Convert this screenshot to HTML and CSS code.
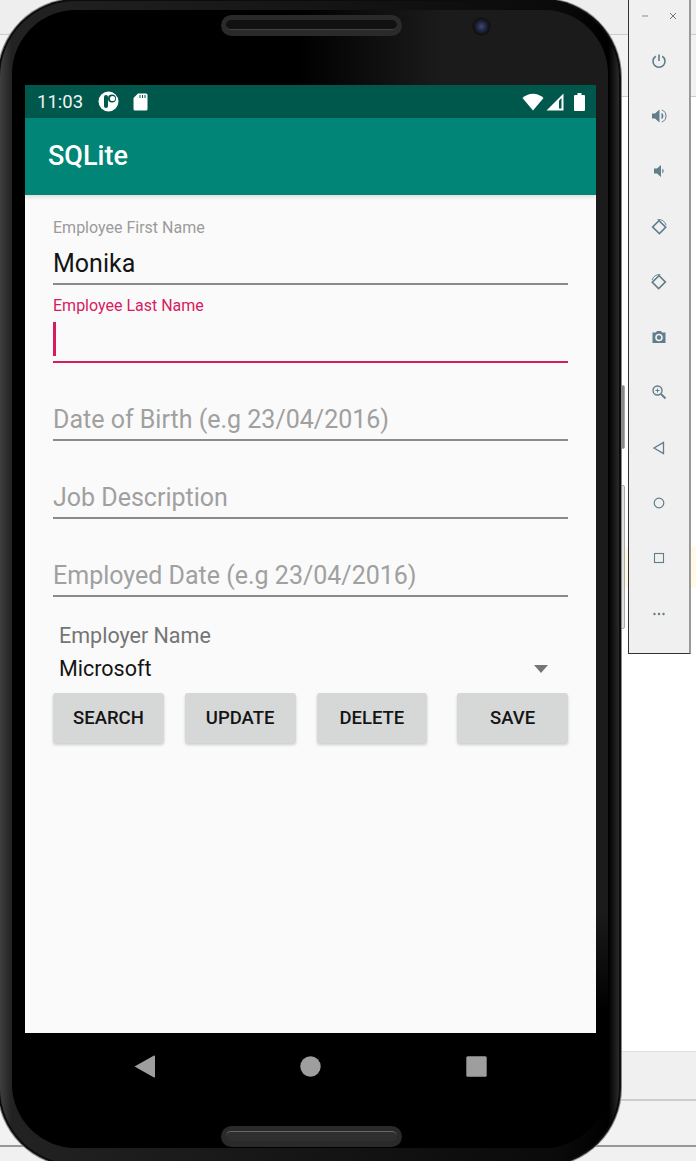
FILE: index.html
```html
<!DOCTYPE html>
<html lang="en">
<head>
  <meta charset="UTF-8">
  <title>SQLite</title>
  <link rel="stylesheet" href="styles.css">
</head>
<body>
  <div class="backdrop">
    <div class="band band-top"></div>
    <div class="band band-second"></div>
    <div class="band band-white"></div>
    <div class="band band-low"></div>
    <div class="band band-lower"></div>
    <div class="band band-last"></div>
  </div>
  <div class="tint"></div>

  <div class="side-key side-key-a"></div>
  <div class="side-key side-key-b"></div>

  <div class="phone">
    <div class="bezel">
      <div class="speaker speaker-top"><span></span></div>
      <div class="camera"></div>

      <div class="screen">
        <div class="status-bar">
          <span class="clock">11:03</span>
          <svg class="st-disc" width="21" height="21" viewBox="0 0 21 21">
            <circle cx="10.5" cy="10.5" r="10" fill="#fff"/>
            <rect x="6" y="4" width="4" height="13" rx="2" fill="#00574b"/>
            <circle cx="14" cy="7.5" r="4" fill="#00574b"/>
            <circle cx="14.5" cy="7.5" r="2.6" fill="#fff"/>
          </svg>
          <svg class="st-sd" width="15" height="18" viewBox="0 0 15 18">
            <path d="M5 0.5h8a1.5 1.5 0 0 1 1.5 1.5v14a1.5 1.5 0 0 1-1.5 1.5H2A1.5 1.5 0 0 1 .5 16V5z" fill="#fff"/>
            <path d="M6.5 2h1v3h-1zM9 2h1v3H9zM11.5 2h1v3h-1z" fill="#00574b"/>
          </svg>
          <span class="st-space"></span>
          <svg width="22" height="18" viewBox="0 0 22 18">
            <path d="M11 17.5L.5 5C3.2 2.4 6.8 .8 11 .8S18.8 2.4 21.5 5z" fill="#fff"/>
          </svg>
          <svg class="st-signal" width="18" height="18" viewBox="0 0 18 18">
            <path d="M17.5 .5V17.5H.5z" fill="#fff"/>
            <path d="M11.5 8H15.5V15.5H11.5z" fill="#00574b" opacity="0"/>
            <path d="M13 7.5L13 15.5H15.5V5z" fill="#00574b"/>
          </svg>
          <svg class="st-battery" width="11" height="18" viewBox="0 0 11 18">
            <path d="M3.5 0h4v2H10a1 1 0 0 1 1 1v14a1 1 0 0 1-1 1H1a1 1 0 0 1-1-1V3a1 1 0 0 1 1-1h2.5z" fill="#fff"/>
          </svg>
        </div>
        <div class="app-bar">SQLite</div>

        <div class="content">
          <div class="field">
            <div class="float-label">Employee First Name</div>
            <div class="value">Monika</div>
          </div>
          <div class="field field-focus">
            <div class="float-label">Employee Last Name</div>
            <div class="value"><span class="caret"></span></div>
          </div>
          <div class="field">
            <div class="value hint">Date of Birth (e.g 23/04/2016)</div>
          </div>
          <div class="field">
            <div class="value hint">Job Description</div>
          </div>
          <div class="field">
            <div class="value hint">Employed Date (e.g 23/04/2016)</div>
          </div>

          <div class="spinner">
            <div class="spinner-label">Employer Name</div>
            <div class="spinner-row">
              <span>Microsoft</span>
              <span class="spinner-arrow"></span>
            </div>
          </div>

          <div class="buttons">
            <button class="btn">SEARCH</button>
            <button class="btn">UPDATE</button>
            <button class="btn">DELETE</button>
            <button class="btn btn-save">SAVE</button>
          </div>
        </div>
      </div>

      <div class="nav-bar">
        <svg width="21" height="23" viewBox="0 0 21 23"><path d="M20 .5a.8.8 0 0 1 1 .8v20.4a.8.8 0 0 1-1 .8L.5 11.5z" fill="#9e9e9e"/></svg>
        <svg width="21" height="21" viewBox="0 0 21 21"><circle cx="10.5" cy="10.5" r="10.2" fill="#9e9e9e"/></svg>
        <svg width="21" height="21" viewBox="0 0 21 21"><rect x=".3" y=".3" width="20.4" height="20.4" rx="1.5" fill="#9e9e9e"/></svg>
      </div>

      <div class="speaker speaker-bottom"><span></span></div>
    </div>
  </div>

  <div class="toolbar">
    <div class="win-controls">
      <svg width="8" height="8" viewBox="0 0 8 8"><path d="M1 4h6" stroke="#7d8f99" stroke-width="1"/></svg>
      <svg width="8" height="8" viewBox="0 0 8 8"><path d="M1 1l6 6M7 1l-6 6" stroke="#607d8b" stroke-width="1"/></svg>
    </div>
    <div class="tool">
      <svg width="16" height="16" viewBox="0 0 16 16"><path d="M8 1.5v6.5" stroke="#607d8b" stroke-width="1.6" fill="none"/><path d="M4.8 3.2a6 6 0 1 0 6.4 0" stroke="#607d8b" stroke-width="1.6" fill="none"/></svg>
    </div>
    <div class="tool">
      <svg width="16" height="16" viewBox="0 0 16 16"><path d="M1 5.5h3L8.5 1.5v13L4 10.5H1z" fill="#607d8b"/><path d="M10.5 4.8a3.6 3.6 0 0 1 0 6.4z" fill="#607d8b"/><path d="M10.8 2a6.4 6.4 0 0 1 0 12" stroke="#607d8b" fill="none"/></svg>
    </div>
    <div class="tool">
      <svg width="16" height="16" viewBox="0 0 16 16"><path d="M3 5.5h3L10 2v12L6 10.5H3z" fill="#607d8b"/><path d="M11.3 5.5a3 3 0 0 1 0 5z" fill="#607d8b"/></svg>
    </div>
    <div class="tool">
      <svg width="16" height="16" viewBox="0 0 16 16"><rect x="3.5" y="3.5" width="9" height="9.5" transform="rotate(-45 8 8)" fill="none" stroke="#607d8b" stroke-width="1.6"/><path d="M6.5 .6a7.5 7.5 0 0 1 8.6 5.6" fill="none" stroke="#607d8b" stroke-width=".9"/></svg>
    </div>
    <div class="tool">
      <svg width="16" height="16" viewBox="0 0 16 16"><rect x="3.5" y="3.5" width="9" height="9.5" transform="rotate(45 8 8)" fill="none" stroke="#607d8b" stroke-width="1.6"/><path d="M1 6.200a7.500 7.500 0 0 1 8.400-5.600" fill="none" stroke="#607d8b" stroke-width=".9"/></svg>
    </div>
    <div class="tool">
      <svg width="16" height="16" viewBox="0 0 16 16"><path d="M1.500 3.500h3.500l1-1.500h4l1 1.500h3.500v10.500h-13z" fill="#607d8b"/><circle cx="8" cy="8.500" r="3" fill="none" stroke="#f0f0f0" stroke-width="1.600"/></svg>
    </div>
    <div class="tool">
      <svg width="16" height="16" viewBox="0 0 16 16"><circle cx="6.500" cy="6.500" r="4.500" fill="none" stroke="#607d8b" stroke-width="1.400"/><path d="M10 10l4.500 4.500" stroke="#607d8b" stroke-width="1.800"/><path d="M4.500 6.500h4M6.500 4.500v4" stroke="#607d8b"/></svg>
    </div>
    <div class="tool">
      <svg width="16" height="16" viewBox="0 0 16 16"><path d="M12.500 2.500v11L3 8z" fill="none" stroke="#607d8b" stroke-width="1.300"/></svg>
    </div>
    <div class="tool">
      <svg width="16" height="16" viewBox="0 0 16 16"><circle cx="8" cy="8" r="4.800" fill="none" stroke="#607d8b" stroke-width="1.200"/></svg>
    </div>
    <div class="tool">
      <svg width="16" height="16" viewBox="0 0 16 16"><rect x="3.500" y="3.500" width="9" height="9" fill="none" stroke="#607d8b" stroke-width="1.100"/></svg>
    </div>
    <div class="tool">
      <svg width="16" height="16" viewBox="0 0 16 16"><circle cx="3.500" cy="8" r="1.200" fill="#607d8b"/><circle cx="8" cy="8" r="1.200" fill="#607d8b"/><circle cx="12.500" cy="8" r="1.200" fill="#607d8b"/></svg>
    </div>
  </div>
</body>
</html>
```

FILE: styles.css
```css
* {
  box-sizing: border-box;
}

html, body {
  margin: 0;
  height: 100%;
}

body {
  position: relative;
  width: 696px;
  height: 1161px;
  overflow: hidden;
  background-color: #fff;
  font-family: Roboto, sans-serif;
}

/* emulator host window behind the phone */
.backdrop {
  position: absolute;
  inset: 0;
  display: flex;
  flex-direction: column;
}

.band-top {
  height: 35px;
  background-color: #eee;
  border-bottom: 1px solid #ccc;
}

.band-second {
  height: 62px;
  background-color: #f2f2f2;
  border-bottom: 1px solid #ccc;
}

.band-white {
  height: 955px;
  background-color: #fff;
  border-bottom: 1px solid #ddd;
}

.band-low {
  height: 49px;
  background-color: #f0f0f0;
  border-bottom: 2px solid #ccc;
}

.band-lower {
  height: 46px;
  background-color: #f2f2f2;
  border-bottom: 2px solid #999;
}

.band-last {
  flex: 1;
  background-color: #f0f0f0;
}

.tint {
  position: absolute;
  left: 622px;
  top: 547px;
  width: 74px;
  height: 41px;
  background-color: #fff9e6;
}

.side-key {
  position: absolute;
  left: 619px;
  width: 6px;
  border: 1px solid #aaa;
  border-radius: 2px;
  background-color: #ddd;
}

.side-key-a {
  top: 385px;
  height: 64px;
  background-color: #888;
}

.side-key-b {
  top: 485px;
  height: 144px;
}

.phone {
  position: absolute;
  left: -2px;
  top: -1px;
  width: 623px;
  height: 1167px;
  padding: 11px 13px 18px 14px;
  border-radius: 78px;
  background-color: #333;
  background-image: linear-gradient(90deg, #444 0, #222 2.2%, #0a0a0a 90%, #000 98%, #333 100%);
  box-shadow: 0 0 0 1px #8a8a8a, inset 0 0 0 2px #0c0c0c;
}

.bezel {
  position: relative;
  height: 100%;
  padding: 75px 0 0 13px;
  border-radius: 64px;
  background-image:
    linear-gradient(180deg, transparent 900px, #000 1000px),
    linear-gradient(90deg, #000 48%, #1b1b1b 72%);
}

.speaker {
  position: absolute;
  left: 209px;
  width: 181px;
  height: 21px;
  padding: 5px 5px;
  border-radius: 11px;
  background-color: #2a2a2a;
}

.speaker span {
  display: block;
  height: 10px;
  border-radius: 5px;
  background-color: #111;
  border-bottom: 1px solid #444;
}

.speaker-top {
  top: 5px;
}

.speaker-bottom {
  bottom: 1px;
}

.speaker-bottom span {
  background-color: #2e2e2e;
  border-bottom: 0;
  border-top: 1px solid #666;
}

.camera {
  position: absolute;
  left: 460px;
  top: 7px;
  width: 19px;
  height: 19px;
  border-radius: 50%;
  background: radial-gradient(circle at 50% 50%, #3e4870 0, #1f2440 35%, #111 60%, #222 100%);
}

.screen {
  width: 571px;
  height: 948px;
  display: flex;
  flex-direction: column;
  background-color: #fafafa;
}

.status-bar {
  height: 33px;
  display: flex;
  align-items: center;
  padding: 0 11px 0 12px;
  background-color: #00574b;
  color: #fff;
}

.clock {
  font-size: 18.500px;
  margin-right: 15px;
  color: #eef5f4;
}

.st-sd {
  margin-left: 14px;
}

.st-space {
  flex: 1;
}

.st-signal {
  margin-left: 2px;
}

.st-battery {
  margin-left: 10px;
}

.app-bar {
  height: 77px;
  display: flex;
  align-items: center;
  padding-left: 23px;
  padding-bottom: 1px;
  background-color: #008577;
  color: #fff;
  font-size: 27px;
  font-weight: 500;
  box-shadow: 0 2px 4px rgba(0, 0, 0, 0.12);
  position: relative;
}

.content {
  flex: 1;
  padding: 12px 28px 0;
}

.field {
  height: 78px;
  display: flex;
  flex-direction: column;
  justify-content: flex-end;
  border-bottom: 2px solid #8a8a8a;
  padding-bottom: 3px;
}

.float-label {
  font-size: 16px;
  line-height: 20px;
  margin-bottom: 10px;
  color: #9b9b9b;
}

.value {
  height: 32px;
  font-size: 25px;
  line-height: 32px;
  color: #141414;
}

.hint {
  color: #a0a0a0;
}

.field-focus {
  border-bottom-color: #d81b60;
}

.field-focus .float-label {
  color: #d81b60;
  margin-bottom: 6px;
}

.field-focus .value {
  height: 36px;
}

.caret {
  display: block;
  width: 3px;
  height: 34px;
  background-color: #d81b60;
}

.spinner {
  padding: 26px 6px 0;
}

.spinner-label {
  font-size: 21.500px;
  line-height: 26px;
  color: #757575;
}

.spinner-row {
  display: flex;
  justify-content: space-between;
  align-items: center;
  margin-top: 5px;
  padding-right: 14px;
  font-size: 21.500px;
  line-height: 30px;
  color: #141414;
}

.spinner-arrow {
  width: 0;
  height: 0;
  border-left: 7px solid transparent;
  border-right: 7px solid transparent;
  border-top: 8px solid #757575;
}

.buttons {
  display: flex;
  gap: 21px;
  margin-top: 9px;
}

.btn {
  width: 111px;
  height: 50px;
  padding: 0;
  border: 0;
  border-radius: 3px;
  background-color: #d6d7d7;
  box-shadow: 0 2px 3px rgba(0, 0, 0, 0.18);
  color: #141414;
  font-family: Roboto, sans-serif;
  font-size: 18.500px;
  font-weight: 500;
}

.btn-save {
  margin-left: 9px;
}

.nav-bar {
  width: 571px;
  height: 67px;
  display: flex;
  justify-content: center;
  align-items: center;
  gap: 145px;
  background-color: #000;
}

/* emulator side toolbar */
.toolbar {
  position: absolute;
  left: 628px;
  top: 0;
  width: 63px;
  height: 654px;
  padding-top: 12px;
  background-color: #f0f0f0;
  border-left: 1px solid #333;
  border-bottom: 1px solid #333;
  border-right: 2px solid #999;
}

.win-controls {
  display: flex;
  justify-content: space-between;
  height: 8px;
  padding: 0 12px;
  margin-bottom: 13px;
}

.tool {
  height: 55.300px;
  display: flex;
  align-items: center;
  justify-content: center;
}
```
